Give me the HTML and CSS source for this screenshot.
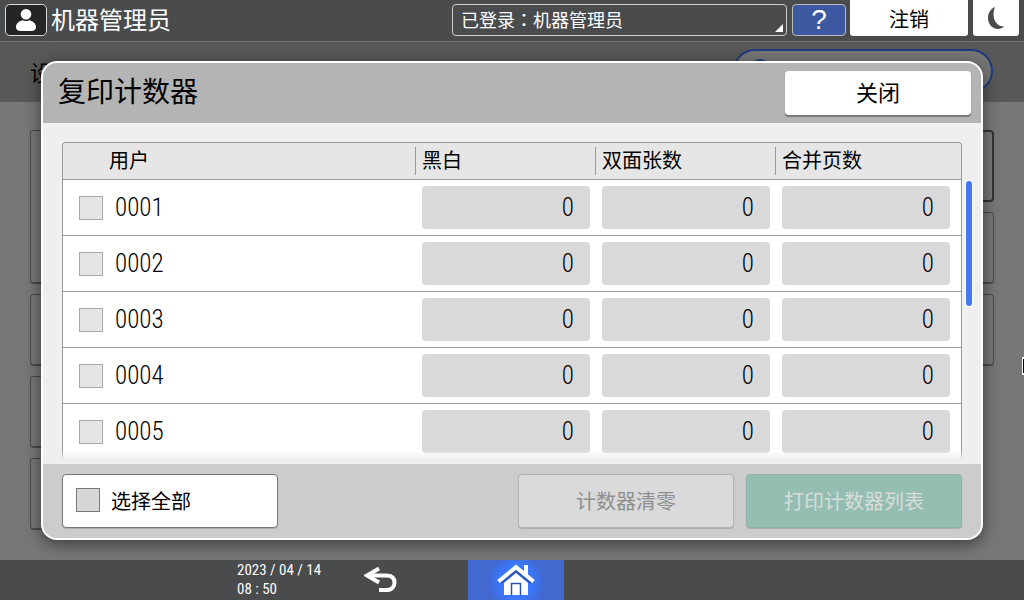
FILE: index.html
```html
<!DOCTYPE html>
<html lang="zh-CN">
<head>
    <meta charset="UTF-8">
    <meta name="viewport" content="width=device-width, initial-scale=1.0">
    <title>复印计数器</title>
    <link rel="stylesheet" href="styles.css">
</head>
<body>
    <header class="topbar">
        <span class="avatar">
            <svg width="20" height="22" viewBox="0 0 20 22" fill="#fff">
                <circle cx="10" cy="5.3" r="5.3"/>
                <path d="M0 18C0 14 4 11.500 7 11.200Q10 13 13 11.200C16 11.500 20 14 20 18Q20 22 15 22H5Q0 22 0 18Z"/>
            </svg>
        </span>
        <span class="user-name">机器管理员</span>
        <button class="login">已登录<span class="colon" lang="zh-TW">：</span>机器管理员</button>
        <button class="help">?</button>
        <button class="logout">注销</button>
        <button class="sleep" aria-label="睡眠">
            <svg width="16" height="22" viewBox="0 0 16 22" fill="#4a4b4d">
                <path d="M7 0C2.500 2 0 6 0 11C0 18 5 22 10 22C12.500 22 14.500 21 16 19.500C10 19.500 6 14.500 5.600 9C5.400 5.500 6 2.500 7 0Z"/>
            </svg>
        </button>
    </header>

    <main class="main">
        <!-- 背景页面 -->
        <div class="page-head">
            <span>设</span>
            <span class="pill"><i></i></span>
        </div>
        <div class="page-body">
            <div class="cards">
                <div class="card tall"></div>
                <div class="card"></div>
                <div class="card"></div>
                <div class="card"></div>
            </div>
            <div class="cards">
                <div class="card current"></div>
                <div class="card"></div>
                <div class="card"></div>
            </div>
        </div>

        <!-- 弹窗 -->
        <section class="dialog" role="dialog">
            <div class="dialog-head">
                <h1>复印计数器</h1>
                <button class="close">关闭</button>
            </div>

            <div class="dialog-body">
                <div class="list">
                    <table class="tab" cellspacing="0">
                        <thead>
                            <tr>
                                <th class="user">用户</th>
                                <th><span>黑白</span></th>
                                <th><span>双面张数</span></th>
                                <th class="last"><span>合并页数</span></th>
                            </tr>
                        </thead>
                        <tbody>
                            <tr>
                                <td><label><input type="checkbox">0001</label></td>
                                <td><input class="count" value="0" aria-label="黑白" readonly></td>
                                <td><input class="count" value="0" aria-label="双面张数" readonly></td>
                                <td><input class="count" value="0" aria-label="合并页数" readonly></td>
                            </tr>
                            <tr>
                                <td><label><input type="checkbox">0002</label></td>
                                <td><input class="count" value="0" aria-label="黑白" readonly></td>
                                <td><input class="count" value="0" aria-label="双面张数" readonly></td>
                                <td><input class="count" value="0" aria-label="合并页数" readonly></td>
                            </tr>
                            <tr>
                                <td><label><input type="checkbox">0003</label></td>
                                <td><input class="count" value="0" aria-label="黑白" readonly></td>
                                <td><input class="count" value="0" aria-label="双面张数" readonly></td>
                                <td><input class="count" value="0" aria-label="合并页数" readonly></td>
                            </tr>
                            <tr>
                                <td><label><input type="checkbox">0004</label></td>
                                <td><input class="count" value="0" aria-label="黑白" readonly></td>
                                <td><input class="count" value="0" aria-label="双面张数" readonly></td>
                                <td><input class="count" value="0" aria-label="合并页数" readonly></td>
                            </tr>
                            <tr>
                                <td><label><input type="checkbox">0005</label></td>
                                <td><input class="count" value="0" aria-label="黑白" readonly></td>
                                <td><input class="count" value="0" aria-label="双面张数" readonly></td>
                                <td><input class="count" value="0" aria-label="合并页数" readonly></td>
                            </tr>
                        </tbody>
                    </table>
                </div>
                <div class="scrollbar"></div>
            </div>

            <div class="dialog-foot">
                <label class="btn select-all"><input type="checkbox">选择全部</label>
                <button class="btn clear" disabled>计数器清零</button>
                <button class="btn print" disabled>打印计数器列表</button>
            </div>
        </section>

        <svg class="cursor" width="2" height="18" viewBox="0 0 2 18">
            <path d="M0 0H2V18H0Z" fill="#fff"/>
            <path d="M1 2H2V16H1Z" fill="#000"/>
        </svg>
    </main>

    <footer class="bottombar">
        <div class="time">
            <div>2023 / 04 / 14</div>
            <div>08 : 50</div>
        </div>
        <button class="back" aria-label="返回">
            <svg width="33" height="26" viewBox="0 0 33 26" fill="none" stroke="#fff">
                <path d="M15 1.500L3 8.500L15 15.500" stroke-width="4"/>
                <path d="M3 8.500H22C28 8.500 30.500 11.500 30.500 15.500C30.500 19.500 28 23 22 23H15" stroke-width="4"/>
            </svg>
        </button>
        <button class="home" aria-label="主页">
            <svg width="38" height="32" viewBox="0 0 38 32">
                <path d="M27 1H31V11L27 8Z" fill="#fff"/>
                <path d="M7 19L19 9L31 19V31H7Z" fill="#fff"/>
                <path d="M14.500 31V19.500H23.500V31" fill="#fff" stroke="#2f52ab" stroke-width="1.5"/>
                <path d="M4 19L19 7L34 19" fill="none" stroke="#2f52ab" stroke-width="2"/>
                <path d="M1.500 17.500L19 3.200L36.500 17.500" fill="none" stroke="#fff" stroke-width="4"/>
            </svg>
        </button>
    </footer>
</body>
</html>
```
FILE: styles.css
```css
*{
    margin: 0px;
    padding: 0px;
    box-sizing: border-box;
}

body{
    display: flex;
    flex-direction: column;
    min-height: 100vh;
    background-color: #4a4b4d;
    color: #000;
    font-family: "Noto Sans CJK SC", sans-serif;
    font-size: 20px;
}

button, input{
    font-family: inherit;
    font-size: inherit;
    font-weight: inherit;
    color: inherit;
    border: none;
    outline: none;
}

/* 顶部栏 */
.topbar{
    display: flex;
    align-items: flex-start;
    height: 42px;
    padding: 0px 5px;
    color: white;
    border-bottom: 1px solid #777;
}

.avatar{
    display: flex;
    align-items: center;
    justify-content: center;
    width: 42px;
    height: 32px;
    margin-top: 4px;
    background-color: #252525;
    border: 1px solid #ddd;
    border-radius: 5px;
}

.user-name{
    flex: 1;
    margin-left: 4px;
    font-size: 24px;
    line-height: 38px;
}

.login{
    position: relative;
    width: 335px;
    height: 32px;
    margin: 4px 5px 0px 0px;
    padding: 0px 0px 2px 8px;
    background-color: transparent;
    border: 1px solid #ccc;
    border-radius: 4px;
    font-size: 18px;
    line-height: 28px;
    text-align: left;
}

.login .colon{
    font-family: "Noto Sans CJK TC", sans-serif;
}

.login::after{
    content: "";
    position: absolute;
    right: 3px;
    bottom: 3px;
    border-left: 8px solid transparent;
    border-bottom: 8px solid white;
}

.help{
    width: 54px;
    height: 32px;
    margin: 4px 4px 0px 0px;
    background-color: #3c58a0;
    border: 1px solid #bbb;
    border-radius: 4px;
    font-family: "Liberation Sans", sans-serif;
    font-size: 28px;
    line-height: 28px;
}

.logout, .sleep{
    height: 36px;
    background-color: white;
    border-radius: 0px 0px 3px 3px;
    color: black;
}

.logout{
    width: 118px;
    margin-right: 5px;
}

.sleep{
    display: flex;
    align-items: center;
    justify-content: center;
    width: 46px;
}

/* 背景页面 */
.main{
    flex: 1;
    position: relative;
    background-color: #777;
    overflow: hidden;
}

.page-head{
    display: flex;
    align-items: center;
    justify-content: space-between;
    height: 60px;
    padding: 0px 31px 2px 30px;
    background-color: #585858;
    font-size: 22px;
}

.pill{
    width: 260px;
    height: 44px;
    padding: 8px 16px;
    background-color: #777;
    border: 2px solid #1f3a80;
    border-radius: 22px;
}

.pill i{
    display: block;
    width: 18px;
    height: 18px;
    background-color: #1f3a80;
    border-radius: 50%;
}

.page-body{
    display: flex;
    justify-content: space-between;
    padding: 28px 30px;
}

.cards{
    display: flex;
    flex-direction: column;
    gap: 10px;
    width: 400px;
}

.card{
    height: 72px;
    border: 1px solid #4a4a4a;
    border-bottom-width: 2px;
    border-radius: 4px;
}

.card.tall{
    height: 154px;
}

.card.current{
    border: 2px solid #333;
}

/* 弹窗 */
.dialog{
    position: absolute;
    top: 19px;
    right: 41px;
    bottom: 20px;
    left: 41px;
    display: flex;
    flex-direction: column;
    background-color: #efefef;
    border: 2px solid white;
    border-radius: 16px;
    box-shadow: 0px 4px 16px rgba(0, 0, 0, 0.5);
    overflow: hidden;
}

.dialog-head{
    display: flex;
    align-items: center;
    justify-content: space-between;
    height: 60px;
    padding: 0px 10px 0px 15px;
    background-color: #b4b4b4;
}

.dialog-head h1{
    padding-bottom: 6px;
    font-size: 28px;
    font-weight: normal;
    line-height: 54px;
}

.close{
    width: 186px;
    height: 44px;
    padding-bottom: 4px;
    background-color: white;
    border-radius: 4px;
    box-shadow: 0px 2px 1px #777;
    font-size: 22px;
}

.dialog-body{
    flex: 1;
    position: relative;
    display: flex;
    padding: 19px 9px 0px 19px;
    overflow: hidden;
}

.dialog-body::after{
    content: "";
    position: absolute;
    right: 0px;
    bottom: 0px;
    left: 0px;
    height: 14px;
    background-image: linear-gradient(rgba(239, 239, 239, 0), #efefef 70%);
}

.list{
    flex: 1;
    background-color: white;
    border: 1px solid #999;
    border-bottom: none;
    border-radius: 4px 4px 0px 0px;
    overflow: hidden;
}

.tab{
    width: 100%;
    table-layout: fixed;
}

.tab th{
    width: 180px;
    height: 37px;
    background-color: #e6e6e6;
    border-bottom: 1px solid #999;
    font-weight: normal;
    text-align: left;
    line-height: 26px;
}

.tab .user{
    width: auto;
    padding: 0px 0px 2px 46px;
}

.tab .last{
    width: 186px;
}

.tab th span{
    display: block;
    height: 28px;
    padding-left: 6px;
    border-left: 1px solid #999;
}

.tab td{
    height: 56px;
    padding-left: 7px;
    border-bottom: 1px solid #999;
    font-family: "Roboto Condensed", "Noto Sans CJK SC", sans-serif;
    font-size: 25px;
    font-weight: 300;
}

.tab td label{
    display: flex;
    align-items: center;
    gap: 12px;
    padding-left: 9px;
    line-height: 28px;
}

input[type="checkbox"]{
    appearance: none;
    width: 24px;
    height: 24px;
    background-color: #e5e5e5;
    border: 1px solid #aaa;
}

.count{
    display: block;
    width: 168px;
    height: 43px;
    padding-right: 16px;
    background-color: #d9d9d9;
    border-radius: 4px;
    text-align: right;
}

.scrollbar{
    width: 6px;
    height: 125px;
    margin: 39px 0px 0px 4px;
    background-color: #4377f2;
    border-radius: 3px;
    box-shadow: 0px 0px 0px 1px white;
}

.dialog-foot{
    display: flex;
    gap: 12px;
    padding: 10px 19px;
    background-color: #ccc;
}

.btn{
    width: 216px;
    height: 54px;
    padding-bottom: 2px;
    border: 1px solid #777;
    border-radius: 4px;
    box-shadow: 0px 1px 1px #aaa;
    font-size: 20px;
}

.select-all{
    display: flex;
    align-items: center;
    gap: 11px;
    margin-right: auto;
    padding-left: 13px;
    background-color: white;
}

.select-all input[type="checkbox"]{
    background-color: #d6d6d6;
    border-color: #777;
}

.clear{
    background-color: #dadada;
    border-color: #b4b4b4;
    color: #8e8e8e;
}

.print{
    background-color: #94beb1;
    border-color: #8fb0a6;
    color: #d8dcdb;
}

.cursor{
    position: absolute;
    top: 315px;
    right: 0px;
}

/* 底部栏 */
.bottombar{
    display: flex;
    height: 40px;
    padding-left: 237px;
    color: white;
}

.time{
    width: 90px;
    padding-top: 1px;
    font-family: "Roboto Condensed", "Noto Sans CJK SC", sans-serif;
    font-size: 15px;
    line-height: 19px;
    white-space: nowrap;
}

.back, .home{
    display: flex;
    align-items: center;
    justify-content: center;
    background-color: transparent;
}

.back{
    width: 106px;
}

.home{
    width: 96px;
    margin-left: 35px;
    background-image: radial-gradient(circle at 50% 55%, #3b78ff 16px, #4169d0 28px);
}
```
